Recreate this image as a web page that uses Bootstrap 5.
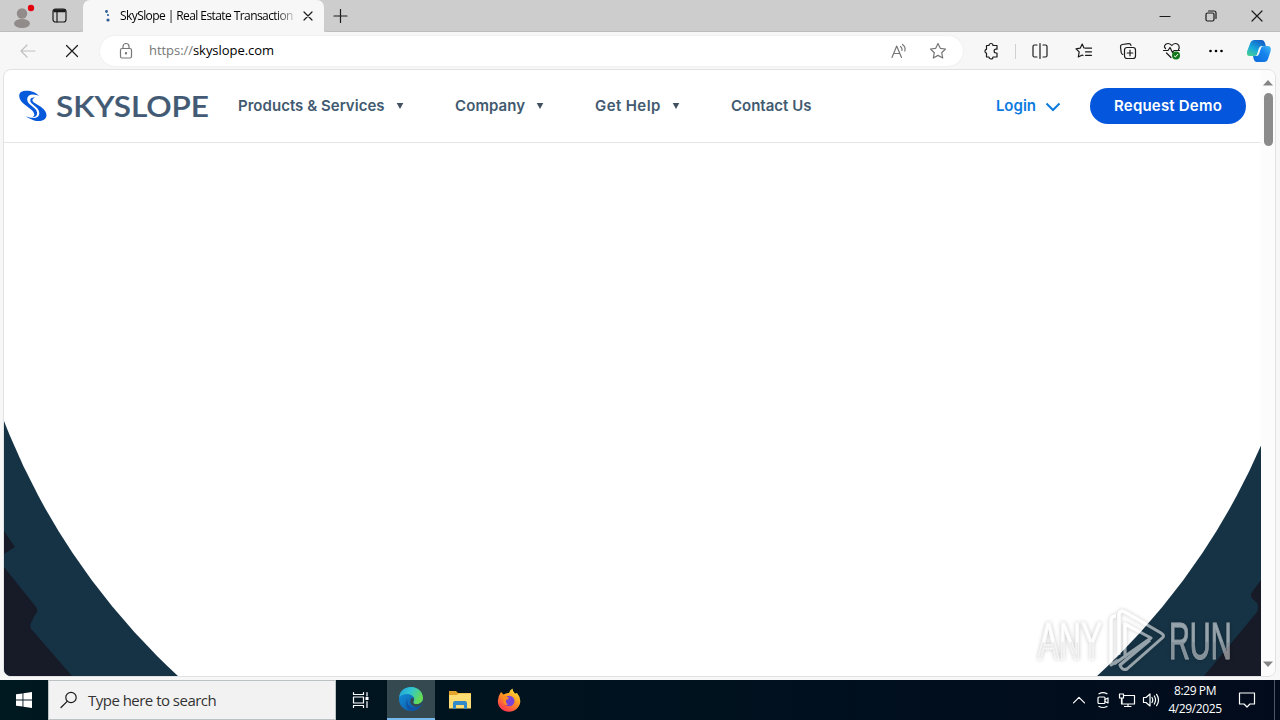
<!DOCTYPE html>
<html lang="en">
<head>
    <meta charset="UTF-8">
    <meta name="viewport" content="width=device-width, initial-scale=1.0">
    <title>SkySlope | Real Estate Transaction Management</title>
    <link href="https://cdn.jsdelivr.net/npm/bootstrap@5.3.0/dist/css/bootstrap.min.css" rel="stylesheet">
    <style>
        body {
            width: 1280px;
            height: 720px;
            overflow: hidden;
            background-color: #f7f7f7;
            color: #111;
            font-family: "Open Sans", "Noto Sans", sans-serif;
            font-size: 12px;
        }
        svg {
            display: block;
            flex-shrink: 0;
        }
        .line {
            fill: none;
            stroke: #1b1b1b;
            stroke-width: 1.2;
            stroke-linecap: round;
            stroke-linejoin: round;
        }
        .line-soft {
            stroke: #777;
        }
        .cell {
            display: flex;
            align-items: center;
            justify-content: center;
            width: 44px;
            height: 100%;
            flex-shrink: 0;
        }

        /* Tab strip */
        .tab-strip {
            height: 32px;
            background-color: #cdcdcd;
        }
        .tab-tools {
            width: 83px;
            border-bottom: 1px solid #bdbdbd;
            border-bottom-right-radius: 4px;
        }
        .tab-rest {
            border-bottom: 1px solid #bdbdbd;
            border-bottom-left-radius: 4px;
        }
        .page-tab {
            width: 241px;
            padding: 0 10px 0 18px;
            background-color: #f7f7f7;
            border-radius: 7px 7px 0 0;
        }
        .tab-title {
            width: 176px;
            margin-left: 7px;
            white-space: nowrap;
            letter-spacing: -0.58px;
            color: #000;
            -webkit-mask-image: linear-gradient(to right, #000 155px, transparent 178px);
            mask-image: linear-gradient(to right, #000 155px, transparent 178px);
        }
        .win-cell {
            width: 46px;
        }

        /* Toolbar */
        .toolbar {
            height: 38px;
            padding-left: 6px;
        }
        .address {
            width: 863px;
            height: 30px;
            margin: 0 6px;
            padding: 0 3px 0 18px;
            background-color: #fff;
            border-radius: 15px;
            box-shadow: 0 0 2px #e4e4e4;
        }
        .url {
            margin-left: 15px;
            font-size: 13px;
            letter-spacing: -0.05px;
            color: #000;
        }
        .url span {
            color: #777;
        }
        .divider {
            width: 1px;
            height: 15px;
            margin: 0 2px;
            background-color: #d0d0d0;
        }

        /* Page */
        .viewport {
            width: 1273px;
            height: 608px;
            margin-left: 3px;
            margin-top: -1px;
            background-color: #fff;
            border: 1px solid #e2e2e2;
            border-radius: 8px;
            overflow: hidden;
        }
        .site {
            width: 1257px;
        }
        .site-head {
            height: 73px;
            padding: 0 15px 0 15px;
            border-bottom: 1px solid #e5e5e5;
            color: #425a70;
            font-family: Inter, sans-serif;
            font-size: 15px;
            font-weight: 600;
        }
        .menu-item {
            display: flex;
            align-items: center;
            white-space: nowrap;
        }
        .menu-item svg {
            margin-left: 11px;
        }
        .products { width: 217px; margin-left: 29px; letter-spacing: 0.03px; }
        .company { width: 140px; letter-spacing: 0.1px; }
        .help { width: 136px; letter-spacing: 0.4px; }
        .login {
            color: #0b7be0;
        }
        .demo {
            width: 156px;
            height: 36px;
            margin-left: 28px;
            padding: 0;
            border-radius: 18px;
            background-color: #0457dc;
            color: #fff;
            font-size: 15px;
            font-weight: 600;
            letter-spacing: 0.2px;
        }
        .scroller {
            width: 14px;
            padding: 10px 0 9px;
            background-color: #fcfcfc;
        }
        .thumb {
            width: 9px;
            height: 53px;
            margin-top: 7px;
            border-radius: 5px;
            background-color: #8b8b8b;
        }

        /* Taskbar */
        .taskbar {
            height: 40px;
            margin-top: 3px;
            background: linear-gradient(to right, #001820, #00121f 50%, #020b1c);
            color: #fff;
        }
        .start {
            width: 48px;
        }
        .search-box {
            width: 288px;
            height: 40px;
            padding-left: 11px;
            background-color: #f2f2f2;
            border: 1px solid #bcc2c4;
            color: #333;
            font-size: 15px;
        }
        .search-box span {
            margin-left: 10px;
            letter-spacing: -0.52px;
        }
        .task {
            width: 49px;
        }
        .task-open {
            width: 48px;
            margin-left: 2px;
            background-color: #354951;
            border-bottom: 2px solid #76b9ed;
        }
        .tray {
            width: 24px;
        }
        .tray .line, .notice .line, .task .line {
            stroke: #fff;
        }
        .clock {
            width: 64px;
            line-height: 18px;
            letter-spacing: -0.4px;
        }
        .notice {
            width: 40px;
        }
        .peek {
            width: 6px;
            margin-left: 7px;
            border-left: 1px solid #4b5563;
        }
    </style>
</head>
<body class="d-flex flex-column">
    <div class="tab-strip d-flex">
        <div class="tab-tools d-flex">
            <div class="cell">
                <svg width="28" height="26" viewBox="0 0 28 26">
                    <circle cx="14" cy="10.500" r="5.200" fill="#918b89"/>
                    <ellipse cx="14" cy="20.500" rx="8" ry="4.500" fill="#918b89"/>
                    <circle cx="23" cy="5" r="3.200" fill="#e3000f"/>
                </svg>
            </div>
            <div class="cell w-auto ms-2">
                <svg width="15" height="15" viewBox="0 0 15 15" class="line">
                    <rect x="1" y="1" width="13" height="13" rx="2.500"/>
                    <path d="M1.500 3.200H13.500M2 2.300H13" stroke-width="2" stroke-linecap="butt"/>
                    <path d="M5 4V14"/>
                </svg>
            </div>
        </div>
        <div class="page-tab d-flex align-items-center">
            <svg width="12" height="14" viewBox="0 0 12 14" fill="#2b5c93">
                <circle cx="5.500" cy="2.500" r="1.400"/>
                <circle cx="7" cy="6" r="1.100"/>
                <circle cx="7" cy="11" r="1.600"/>
            </svg>
            <div class="tab-title">SkySlope | Real Estate Transaction</div>
            <svg class="line ms-auto" width="12" height="12" viewBox="0 0 12 12"><path d="M2 2L10 10M10 2L2 10"/></svg>
        </div>
        <div class="tab-rest d-flex flex-grow-1">
            <div class="cell w-auto ps-2">
                <svg class="line" width="16" height="14" viewBox="0 0 16 14"><path d="M8.500 0.500V13.500M2 7H15"/></svg>
            </div>
            <div class="cell win-cell ms-auto">
                <svg class="line" width="12" height="12" viewBox="0 0 12 12"><path d="M1 6.500H11"/></svg>
            </div>
            <div class="cell win-cell">
                <svg class="line" width="12" height="12" viewBox="0 0 12 12"><rect x="1" y="3" width="8" height="8" rx="1.500"/><path d="M3.500 1H9Q11 1 11 3V8.500"/></svg>
            </div>
            <div class="cell win-cell">
                <svg class="line" width="12" height="12" viewBox="0 0 12 12"><path d="M1 1L11 11M11 1L1 11"/></svg>
            </div>
        </div>
    </div>

    <div class="toolbar d-flex align-items-center">
        <div class="cell">
            <svg class="line" width="16" height="14" viewBox="0 0 16 14" opacity=".25"><path d="M15 7H1M7 1L1 7L7 13"/></svg>
        </div>
        <div class="cell">
            <svg class="line" width="14" height="14" viewBox="0 0 14 14"><path d="M1.500 1.500L12.500 12.500M12.500 1.500L1.500 12.500"/></svg>
        </div>
        <div class="address d-flex align-items-center">
            <svg class="line line-soft" width="16" height="18" viewBox="0 0 16 18">
                <rect x="2.500" y="6.500" width="11" height="9.500" rx="1.500"/>
                <path d="M5 6.500V4.500A3 3 0 0 1 11 4.500V6.500"/>
                <circle cx="8" cy="11.200" r=".6" fill="#777"/>
            </svg>
            <div class="url"><span>https://</span>skyslope.com</div>
            <div class="cell ms-auto w-auto">
                <svg class="line line-soft" width="18" height="16" viewBox="0 0 18 16"><path d="M2 14.500L6.700 3L11.500 14.500M3.700 10.500H9.800M10.500 3.500Q12.500 5 12 7.500M12.500 1.500Q16 4 14.800 8"/></svg>
            </div>
            <div class="cell ms-2">
                <svg class="line line-soft" width="18" height="18" viewBox="0 0 18 18"><path d="M9 1.500L11.300 6.300L16.500 7L12.700 10.700L13.700 16L9 13.400L4.300 16L5.300 10.700L1.500 7L6.700 6.300Z"/></svg>
            </div>
        </div>
        <div class="cell">
            <svg class="line" width="18" height="18" viewBox="0 0 18 18"><path d="M4.500 3.500H7A2 2 0 0 1 11 3.500H15V7.200H14A1.900 1.900 0 0 0 14 11H15V15H11A2 2 0 0 1 7 15H4.500V11.200A2 2 0 0 1 4.500 7.300Z"/></svg>
        </div>
        <div class="divider"></div>
        <div class="cell">
            <svg class="line" width="18" height="18" viewBox="0 0 18 18"><path d="M6 3H3.500Q2 3 2 4.500V13.500Q2 15 3.500 15H6M12 3H14.500Q16 3 16 4.500V13.500Q16 15 14.500 15H12M9 1.500V16.500"/></svg>
        </div>
        <div class="cell">
            <svg class="line" width="18" height="18" viewBox="0 0 18 18"><path d="M9.500 6H9L7.200 2L5.200 6.200L1 6.800L4.200 9.900L3.300 15L7.200 13L8 13.500M10.500 6.200H16.500M10.500 9.800H16.500M10.500 13.300H16.500"/></svg>
        </div>
        <div class="cell">
            <svg class="line" width="18" height="18" viewBox="0 0 18 18"><rect x="5.500" y="5.500" width="11" height="11" rx="2.500"/><path d="M11 8.200V13.800M8.200 11H13.800M3.800 12.500Q2.500 12 2.200 10.500L1.500 5Q1.300 3 3.200 2.500L9.500 1.600Q11.700 1.500 12 3.300"/></svg>
        </div>
        <div class="cell">
            <svg width="20" height="18" viewBox="0 0 20 18">
                <path class="line" d="M3.500 6.500Q1.800 5 2.700 3.500C4.500 .5 8 1.200 9.800 3.500C11.600 1.200 15 .5 16.800 3.500Q17.800 6 16.500 7.500M1.500 8.500H6L8 5.500L10.500 10.500L12 8.500H17.500M4.500 11L9 15.500"/>
                <circle cx="14" cy="13.500" r="4" fill="#13781b"/>
                <path d="M12 13.700L13.400 15L16 12" fill="none" stroke="#fff" stroke-width="1"/>
            </svg>
        </div>
        <div class="cell">
            <svg width="16" height="4" viewBox="0 0 16 4"><circle cx="2.500" cy="2" r="1.300"/><circle cx="8" cy="2" r="1.300"/><circle cx="13.500" cy="2" r="1.300"/></svg>
        </div>
        <svg class="ms-auto me-2" width="26" height="26" viewBox="0 0 26 26">
            <defs>
                <linearGradient id="cpLeft" x1="0" y1="1" x2=".6" y2="0"><stop offset="0" stop-color="#4fd58a"/><stop offset=".5" stop-color="#18a8dd"/><stop offset="1" stop-color="#1464c8"/></linearGradient>
                <linearGradient id="cpRight" x1="0" y1="1" x2="1" y2="0"><stop offset="0" stop-color="#0b69d8"/><stop offset=".6" stop-color="#1684ee"/><stop offset="1" stop-color="#46bdf2"/></linearGradient>
            </defs>
            <path d="M8 2H16Q18 2 19 5L19.800 8H15.500Q13.500 8 12.800 10.500L10.800 17Q10.200 18 8 18H3.500Q0 18 1.200 13L4.500 4.500Q5.500 2 8 2Z" fill="url(#cpLeft)"/>
            <path d="M18 24H11Q8.500 24 7.700 21L7 18H10.500Q12.500 18 13.200 15.500L15.200 9.500Q15.800 8 18 8H21.500Q26 8 24.500 13.500L22 21Q21 24 18 24Z" fill="url(#cpRight)"/>
        </svg>
    </div>

    <main class="viewport d-flex flex-shrink-0">
        <div class="site d-flex flex-column flex-shrink-0">
            <header class="site-head d-flex align-items-center flex-shrink-0">
                <svg width="190" height="34" viewBox="0 0 190 34">
                    <g fill="#0759dc">
                        <path d="M20.500 7.200C15 1 6 .6 2 3C-1.500 6 .5 11.500 5 15L12 20.500C16 23.800 16.500 27 13 28.500C18.500 28.500 19.700 23.500 16 19.800L10.500 15C6.500 11 8 6 13 5.500C16 5.300 18.500 6.200 20.500 7.200Z"/>
                        <path d="M17.500 9.200C13.500 8.500 12.500 11.300 14.500 13.200C18 16 27.800 19.500 27.500 26.500C27 32 20 33.200 14.500 31.200Q10 29.800 6.500 27.300Q13 30 17.500 28.500C21.500 26.700 20.800 22 18 19L12.300 14C9.800 11 12 7 17.500 9.200Z"/>
                    </g>
                    <text x="37" y="27.500" textLength="153" lengthAdjust="spacingAndGlyphs" font-family="Lato, sans-serif" font-size="28.500" fill="#425a73" stroke="#425a73" stroke-width=".2">SKYSLOPE</text>
                </svg>
                <div class="menu-item products">Products &amp; Services <svg width="8" height="6" viewBox="0 0 8 6"><path d="M.7 0H7.300L4 6Z" fill="#425060"/></svg></div>
                <div class="menu-item company">Company <svg width="8" height="6" viewBox="0 0 8 6"><path d="M.7 0H7.300L4 6Z" fill="#425060"/></svg></div>
                <div class="menu-item help">Get Help <svg width="8" height="6" viewBox="0 0 8 6"><path d="M.7 0H7.300L4 6Z" fill="#425060"/></svg></div>
                <div class="menu-item">Contact Us</div>
                <div class="menu-item login ms-auto">Login <svg class="ms-2" width="18" height="12" viewBox="0 0 18 12"><path d="M2.500 3.500L9 10L15.500 3.500" fill="none" stroke="#0b7be0" stroke-width="2"/></svg></div>
                <button class="btn demo">Request Demo</button>
            </header>
            <!-- Dark backdrop with the white disc over it -->
            <svg width="1257" height="533" viewBox="4 143 1257 533">
                <rect x="4" y="143" width="1257" height="533" fill="#163345"/>
                <path d="M4 531L15 547L4 554ZM4 567L36 607Q39 611 35 615L31 623Q29 628 33 631L72 676H4ZM1261 580L1252 592Q1249 597 1254 600L1257 603Q1259 607 1257 612L1204 676H1261Z" fill="#171a27"/>
                <circle cx="637.500" cy="175.600" r="679.400" fill="#fff"/>
                <defs>
                    <filter id="glow" x="-10%" y="-20%" width="120%" height="140%"><feDropShadow dx="0" dy="0" stdDeviation="2" flood-color="#000" flood-opacity=".45"/></filter>
                    <linearGradient id="fade" x1="0" y1="0" x2="0" y2="1"><stop offset=".5" stop-color="#fff"/><stop offset=".52" stop-color="#dedede"/></linearGradient>
                </defs>
                <g filter="url(#glow)" opacity=".55" font-family="'Liberation Sans Narrow', 'Liberation Sans', sans-serif" font-size="51" fill="url(#fade)" stroke="#f2f2f2" stroke-width="1">
                    <text transform="translate(1038 659) scale(.62 1)" textLength="103" lengthAdjust="spacingAndGlyphs">ANY</text>
                    <text transform="translate(1169 659) scale(.62 1)" textLength="101" lengthAdjust="spacingAndGlyphs">RUN</text>
                    <g fill="none" stroke="#fff" stroke-width="3" stroke-linejoin="round">
                        <path d="M1118 660L1111 665V621Q1111 616 1116 616"/>
                        <path d="M1119 655V614Q1120 610 1125 612L1161 633Q1166 636 1161 639L1127 669Q1122 671 1120 665L1150 640"/>
                        <path d="M1125 658V624L1151 638L1114 664"/>
                    </g>
                </g>
            </svg>
        </div>
        <div class="scroller d-flex flex-column align-items-center">
            <svg width="10" height="6" viewBox="0 0 10 6"><path d="M0 5.500L5 0L10 5.500Z" fill="#858585"/></svg>
            <div class="thumb"></div>
            <svg class="mt-auto" width="10" height="6" viewBox="0 0 10 6"><path d="M0 .5L5 6L10 .5Z" fill="#858585"/></svg>
        </div>
    </main>

    <footer class="taskbar d-flex flex-shrink-0">
        <div class="cell start">
            <svg width="16" height="16" viewBox="0 0 16 16" fill="#fff"><path d="M0 2.300L6.500 1.400V7.500H0ZM7.400 1.200L16 0V7.500H7.400ZM0 8.400H6.500V14.600L0 13.700ZM7.400 8.400H16V16L7.400 14.800Z"/></svg>
        </div>
        <div class="search-box d-flex align-items-center">
            <svg class="line" width="18" height="18" viewBox="0 0 18 18"><circle cx="11" cy="6.500" r="5.200"/><path d="M7.200 10.300L1 16.500"/></svg>
            <span>Type here to search</span>
        </div>
        <div class="cell task">
            <svg class="line" width="18" height="18" viewBox="0 0 18 18"><path d="M1.500 1.500V3.500H11.500V1.500M1.500 16.500V14.500H11.500V16.500M1.500 6H11.500V12H1.500ZM15 1.500V5M15 10.500V16.500"/><path d="M15 6V9" stroke-width="3" stroke-linecap="butt"/></svg>
        </div>
        <div class="cell task task-open">
            <svg width="26" height="26" viewBox="0 0 26 26">
                <defs>
                    <linearGradient id="edTop" x1="0" y1="0" x2="1" y2=".4"><stop offset="0" stop-color="#219ed9"/><stop offset=".5" stop-color="#30c5d0"/><stop offset="1" stop-color="#66db53"/></linearGradient>
                    <linearGradient id="edLow" x1="0" y1="0" x2="1" y2="1"><stop offset="0" stop-color="#1597df"/><stop offset="1" stop-color="#0b4c9d"/></linearGradient>
                </defs>
                <circle cx="13" cy="13" r="12" fill="url(#edLow)"/>
                <path d="M1.200 11C2 4.500 7 1 13 1C20.500 1 25 6.500 25 12C25 16 22 18.200 18.500 18.200C16 18.200 14.500 17.300 15.500 15.500C18 12 14 8 9.500 8Q4 8 1.200 11Z" fill="url(#edTop)"/>
                <path d="M9.500 12.500C8 18 12 22 17 21.500Q21 21 24 18.500Q20 25 13.500 25C8.500 24 6.500 17.500 9.500 12.500Z" fill="#1054a6"/>
                <path d="M15.500 15.500C14.500 17.300 16 18.200 18.500 18.200Q23 18.200 24.500 14.500V17.500Q21 21.500 16.500 20.500Q11 18.500 12.500 13.500Q14 11 15.800 12Z" fill="#354951"/>
            </svg>
        </div>
        <div class="cell task">
            <svg width="24" height="22" viewBox="0 0 24 22">
                <path d="M1 2H8L10 4H23V19H1Z" fill="#e5a52b"/>
                <path d="M1 6H9L10.500 4.500H23V19.500H1Z" fill="#ffdc72"/>
                <path d="M5 20V14Q5 12 7 12H17Q19 12 19 14V20H16V16H8V20Z" fill="#348ac9"/>
            </svg>
        </div>
        <div class="cell task">
            <svg width="24" height="24" viewBox="0 0 24 24">
                <defs>
                    <linearGradient id="fox" x1=".8" y1="0" x2=".2" y2="1"><stop offset="0" stop-color="#ffe43b"/><stop offset=".45" stop-color="#ff9522"/><stop offset="1" stop-color="#fb2b55"/></linearGradient>
                </defs>
                <path d="M4 4L6.500 6.500Q9 4.800 12 5Q12.500 2.200 15.500 .5Q15.500 3 18 5.500L20 5Q23.500 9 23.300 13.500C23 19.500 18 23.700 12 23.700C6 23.700 .8 19.500 .8 13Q1 8 4 4Z" fill="url(#fox)"/>
                <circle cx="12.200" cy="13" r="5.300" fill="#7943d6"/>
                <path d="M5 9Q8 7.500 10.500 9L12 10Q11 11.500 9 12Q8.500 15 11 16.500Q9 17.500 7 16Z" fill="#ff8b21"/>
            </svg>
        </div>
        <div class="cell tray ms-auto">
            <svg class="line" width="14" height="8" viewBox="0 0 14 8"><path d="M1.500 6.800L7 1.300L12.500 6.800"/></svg>
        </div>
        <div class="cell tray">
            <svg class="line" width="14" height="18" viewBox="0 0 14 18"><rect x="2" y="6" width="7" height="6.500" rx="1"/><path d="M9 8.500L12 7V12L9 10.500M3 2.800Q7 .5 11 2.800M3 15.500Q7 17.500 11 15.500"/></svg>
        </div>
        <div class="cell tray">
            <svg class="line" width="18" height="16" viewBox="0 0 18 16"><path d="M6 3.500H16.500V12H4V6.500M6.500 14.500H13M10 12V14.500M1.500 2H5.500V6H1.500ZM3.500 6V12H4"/></svg>
        </div>
        <div class="cell tray">
            <svg class="line" width="18" height="16" viewBox="0 0 18 16"><path d="M1.500 5.500H4L8 2V14L4 10.500H1.500ZM10 5.500Q11.500 8 10 10.500M12.300 4Q14.800 8 12.300 12M14.600 2.300Q18.500 8 14.600 13.700"/></svg>
        </div>
        <div class="clock d-flex flex-column justify-content-center text-center">
            <div>8:29 PM</div>
            <div>4/29/2025</div>
        </div>
        <div class="cell notice">
            <svg class="line" width="18" height="18" viewBox="0 0 18 18"><path d="M1.500 2H16.500V13H12L9 16L6 13H1.500Z"/></svg>
        </div>
        <div class="peek"></div>
    </footer>
</body>
</html>
